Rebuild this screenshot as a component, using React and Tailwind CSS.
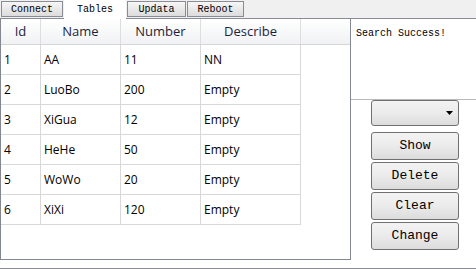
import React from 'react';

const rows = [
  ['1', 'AA', '11', 'NN'],
  ['2', 'LuoBo', '200', 'Empty'],
  ['3', 'XiGua', '12', 'Empty'],
  ['4', 'HeHe', '50', 'Empty'],
  ['5', 'WoWo', '20', 'Empty'],
  ['6', 'XiXi', '120', 'Empty'],
];

const cols = [
  { name: 'Id', w: 'w-[40px]' },
  { name: 'Name', w: 'w-[80px]' },
  { name: 'Number', w: 'w-[80px]' },
  { name: 'Describe', w: 'w-[100px]' },
];

const mono = "font-['SimSun','Liberation_Mono',monospace] font-normal";

function Tab({ label, active, w }) {
  if (active) {
    return (
      <div className={`${w} h-[19px] bg-white -mb-px z-10 flex items-center justify-center text-[10px] text-black ${mono}`}>
        {label}
      </div>
    );
  }
  return (
    <div className={`${w} h-[16px] mb-px border border-[#898c95] bg-gradient-to-b from-[#f6f6f6] to-[#dcdcdc] flex items-center justify-center text-[10px] text-black ${mono}`}>
      {label}
    </div>
  );
}

function Btn({ children }) {
  return (
    <button className={`w-[88px] h-[28px] rounded-[3px] border border-[#707070] bg-gradient-to-b from-[#f3f3f3] via-[#ebebeb] to-[#dcdcdc] text-[13px] text-black flex items-center justify-center ${mono}`}>
      {children}
    </button>
  );
}

export default function App() {
  return (
    <div className="w-[476px] h-[269px] bg-[#f0f0f0] overflow-hidden">
      {/* tab strip */}
      <div className="flex items-end h-[18px] pl-[1px] gap-[1px]">
        <Tab label="Connect" w="w-[62px]" />
        <Tab label="Tables" w="w-[62px]" active />
        <Tab label="Updata" w="w-[59px]" />
        <Tab label="Reboot" w="w-[57px]" />
      </div>

      {/* tab page */}
      <div className="h-[251px] bg-white border-t border-b border-[#898c95] flex">
        {/* grid */}
        <div className="w-[351px] h-[241px] border-l border-r border-b border-[#828790] bg-white flex flex-col font-['Open_Sans',sans-serif]">
          <div className="flex h-[26px] border-b border-[#d5d5d5]">
            {cols.map((c) => (
              <div
                key={c.name}
                className={`${c.w} h-full border-r border-[#dedede] bg-gradient-to-b from-white to-[#f1f2f4] flex items-center justify-center text-[13px] text-[#1e1e3c]`}
              >
                {c.name}
              </div>
            ))}
            <div className="flex-1 h-full bg-gradient-to-b from-white to-[#f1f2f4]" />
          </div>
          {rows.map((r) => (
            <div key={r[0]} className="flex h-[30px]">
              {r.map((v, i) => (
                <div
                  key={i}
                  className={`${cols[i].w} h-full border-r border-b border-[#d8d8d8] pl-[3px] flex items-center text-[12px] text-black`}
                >
                  {v}
                </div>
              ))}
            </div>
          ))}
        </div>

        {/* right side */}
        <div className="flex-1 flex flex-col">
          <div className={`h-[81px] border-b border-[#b8b8b8] pl-[5px] pt-[7px] text-[10px] text-black ${mono}`}>
            Search Success!
          </div>
          <div className="pl-[20px] flex flex-col gap-[2px]">
            <div className="w-[88px] h-[26px] rounded-[3px] border border-[#707070] bg-gradient-to-b from-[#f3f3f3] via-[#ebebeb] to-[#dcdcdc] flex items-center justify-end pr-[5px]">
              <svg width="7" height="4" viewBox="0 0 7 4">
                <path d="M0 0 H7 L3.5 4 Z" fill="#000" />
              </svg>
            </div>
            <div className="h-[2px]" />
            <Btn>Show</Btn>
            <Btn>Delete</Btn>
            <Btn>Clear</Btn>
            <Btn>Change</Btn>
          </div>
        </div>
      </div>
    </div>
  );
}
